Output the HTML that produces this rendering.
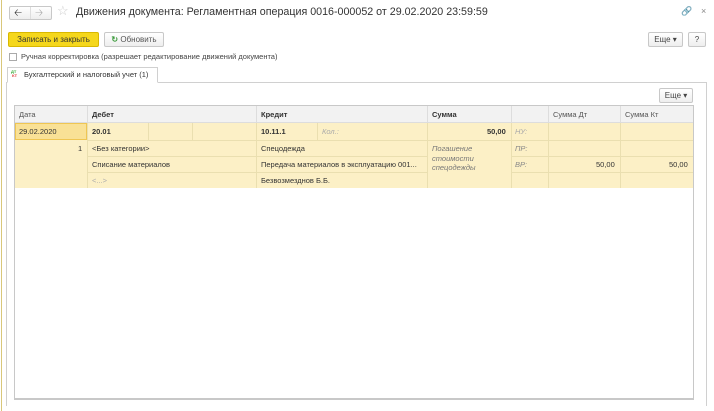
<!DOCTYPE html>
<html><head><meta charset="utf-8"><style>
*{box-sizing:border-box;margin:0;padding:0}
body{width:714px;height:411px;background:#fff;font-family:"Liberation Sans",Arial,sans-serif;font-size:8px;color:#333;position:relative;overflow:hidden}
.a{position:absolute}
.btn{position:absolute;border:1px solid #c8c8c8;border-radius:2px;background:linear-gradient(#fff,#eee);font-size:8px;color:#444;text-align:center;line-height:13px}
.t{position:absolute;white-space:nowrap;font-size:7.5px}
.vl{position:absolute;width:1px;background:#eadfb0}
.hl{position:absolute;height:1px;background:#fff6d8}
</style></head><body>
<div class="a" style="left:1px;top:0;width:1px;height:411px;background:#d9c77a"></div>
<div class="btn" style="left:9px;top:6px;width:43px;height:14px;"></div>
<div class="a" style="left:30px;top:7px;width:1px;height:12px;background:#ddd"></div>
<div class="t" style="left:14px;top:6px;font-size:10px;color:#333">&#129120;</div>
<div class="t" style="left:35px;top:6px;font-size:10px;color:#aaa">&#129122;</div>
<div class="t" style="left:57px;top:3px;font-size:13px;color:#ccc">☆</div>
<div class="t" style="left:76px;top:6px;font-size:10.7px;color:#333">Движения документа: Регламентная операция 0016-000052 от 29.02.2020 23:59:59</div>
<div class="t" style="left:681px;top:6px;font-size:9px;color:#aaa">&#128279;</div>
<div class="t" style="left:701px;top:6px;font-size:9px;color:#888">×</div>
<div class="btn" style="left:8px;top:32px;width:91px;height:15px;background:#f5d71c;border-color:#d9b800;color:#333;line-height:13px">Записать и закрыть</div>
<div class="btn" style="left:104px;top:32px;width:60px;height:15px;color:#555"><span style="color:#3a9a3a;font-weight:bold">↻</span> Обновить</div>
<div class="btn" style="left:648px;top:32px;width:35px;height:15px;">Еще ▾</div>
<div class="btn" style="left:688px;top:32px;width:18px;height:15px;">?</div>
<div class="a" style="left:9px;top:53px;width:8px;height:8px;border:1px solid #aaa;background:#fff"></div>
<div class="t" style="left:21px;top:52px;color:#444">Ручная корректировка (разрешает редактирование движений документа)</div>
<div class="a" style="left:6px;top:82px;width:701px;height:324px;border:1px solid #d0d0d0;border-bottom:none"></div>
<div class="a" style="left:7px;top:67px;width:151px;height:16px;border:1px solid #d0d0d0;border-bottom:1px solid #fff;background:#fff"></div>
<div class="t" style="left:11px;top:70px;font-size:4px;color:#3a3;font-weight:bold;line-height:4px">ДТ<br><span style="color:#d33">&nbsp;КТ</span></div>
<div class="t" style="left:24px;top:70px;color:#333">Бухгалтерский и налоговый учет (1)</div>
<div class="btn" style="left:659px;top:88px;width:34px;height:15px;">Еще ▾</div>
<div class="a" style="left:14px;top:105px;width:680px;height:295px;border:1px solid #c8c8c8;border-bottom:2px solid #c8c8c8"></div>
<div class="a" style="left:15px;top:106px;width:678px;height:17px;background:#f2f2f2;border-bottom:1px solid #ddd"></div>
<div class="a" style="left:15px;top:123px;width:678px;height:65px;background:#fcf0c6"></div>
<div class="a" style="left:15px;top:123px;width:72px;height:17px;background:#f9e196;border:1px solid #efc653"></div>
<div class="vl" style="left:87px;top:106px;height:17px;background:#ddd"></div>
<div class="vl" style="left:256px;top:106px;height:17px;background:#ddd"></div>
<div class="vl" style="left:427px;top:106px;height:17px;background:#ddd"></div>
<div class="vl" style="left:511px;top:106px;height:17px;background:#ddd"></div>
<div class="vl" style="left:548px;top:106px;height:17px;background:#ddd"></div>
<div class="vl" style="left:620px;top:106px;height:17px;background:#ddd"></div>
<div class="vl" style="left:87px;top:123px;height:65px"></div>
<div class="vl" style="left:256px;top:123px;height:65px"></div>
<div class="vl" style="left:427px;top:123px;height:65px"></div>
<div class="vl" style="left:511px;top:123px;height:65px"></div>
<div class="vl" style="left:548px;top:123px;height:65px"></div>
<div class="vl" style="left:620px;top:123px;height:65px"></div>
<div class="vl" style="left:148px;top:123px;height:17px"></div>
<div class="vl" style="left:192px;top:123px;height:17px"></div>
<div class="vl" style="left:317px;top:123px;height:17px"></div>
<div class="hl" style="left:87px;top:140px;width:340px;background:#eadfb0"></div>
<div class="hl" style="left:87px;top:156px;width:340px;background:#eadfb0"></div>
<div class="hl" style="left:87px;top:172px;width:340px;background:#eadfb0"></div>
<div class="hl" style="left:511px;top:140px;width:182px;background:#eadfb0"></div>
<div class="hl" style="left:511px;top:156px;width:182px;background:#eadfb0"></div>
<div class="hl" style="left:511px;top:172px;width:182px;background:#eadfb0"></div>
<div class="hl" style="left:427px;top:140px;width:84px;background:#eadfb0"></div>
<div class="t" style="left:19px;top:110px;color:#555">Дата</div>
<div class="t" style="left:92px;top:110px;font-weight:bold">Дебет</div>
<div class="t" style="left:261px;top:110px;font-weight:bold">Кредит</div>
<div class="t" style="left:432px;top:110px;font-weight:bold">Сумма</div>
<div class="t" style="left:553px;top:110px;color:#555">Сумма Дт</div>
<div class="t" style="left:625px;top:110px;color:#555">Сумма Кт</div>
<div class="t" style="left:19px;top:127px">29.02.2020</div>
<div class="t" style="left:92px;top:127px;font-weight:bold">20.01</div>
<div class="t" style="left:261px;top:127px;font-weight:bold">10.11.1</div>
<div class="t" style="left:322px;top:127px;color:#aaa;font-style:italic">Кол.:</div>
<div class="t" style="left:487px;top:127px;font-weight:bold">50,00</div>
<div class="t" style="left:515px;top:127px;color:#aaa;font-style:italic">НУ:</div>
<div class="t" style="left:78px;top:144px">1</div>
<div class="t" style="left:92px;top:144px">&lt;Без категории&gt;</div>
<div class="t" style="left:261px;top:144px">Спецодежда</div>
<div class="t" style="left:432px;top:144px;color:#777;font-style:italic;line-height:9.5px">Погашение<br>стоимости<br>спецодежды</div>
<div class="t" style="left:515px;top:144px;color:#888;font-style:italic">ПР:</div>
<div class="t" style="left:92px;top:160px">Списание материалов</div>
<div class="t" style="left:261px;top:160px">Передача материалов в эксплуатацию 001...</div>
<div class="t" style="left:515px;top:160px;color:#888;font-style:italic">ВР:</div>
<div class="t" style="left:596px;top:160px">50,00</div>
<div class="t" style="left:669px;top:160px">50,00</div>
<div class="t" style="left:92px;top:176px;color:#aaa">&lt;...&gt;</div>
<div class="t" style="left:261px;top:176px">Безвозмезднов Б.Б.</div>
</body></html>
